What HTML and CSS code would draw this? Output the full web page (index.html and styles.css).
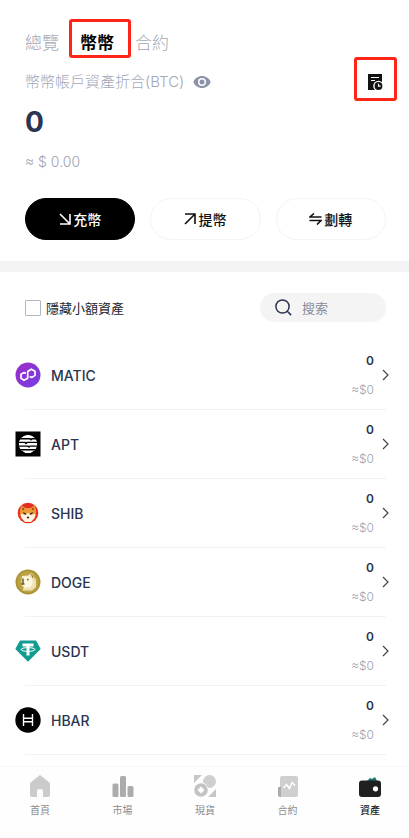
FILE: index.html
```html
<!DOCTYPE html>
<html lang="zh-Hant">
<head>
  <meta charset="UTF-8">
  <meta name="viewport" content="width=device-width, initial-scale=1.0">
  <title>資產</title>
  <link rel="stylesheet" href="styles.css">
</head>
<body>
  <header class="summary">
    <nav class="tabs">
      <a href="#overview">總覽</a>
      <a href="#spot" class="active marked">幣幣</a>
      <a href="#futures">合約</a>
    </nav>

    <div class="account">
      <span>幣幣帳戶資產折合(BTC)</span>
      <button class="icon-button eye" aria-label="顯示餘額">
        <svg width="18" height="12" viewBox="0 0 18 12"><path d="M9 0C5 0 1.7 2.500 0.300 6 1.700 9.500 5 12 9 12s7.300-2.500 8.700-6C16.300 2.500 13 0 9 0z" fill="#8b93a7"/><circle cx="9" cy="6" r="4" fill="#fff"/><circle cx="9" cy="6" r="2.500" fill="#8b93a7"/></svg>
      </button>
      <button class="icon-button history marked" aria-label="歷史記錄">
        <svg width="16" height="18" viewBox="0 0 16 18"><path d="M1 1h14v16H1z" fill="#111"/><path d="M4 4.500h8M4 7.500h4" stroke="#fff" stroke-width="1.200"/><circle cx="11.500" cy="13" r="4.600" fill="#111" stroke="#fff" stroke-width="1.400"/><path d="M11.500 10.800V13.200h2.200" fill="none" stroke="#fff" stroke-width="1.200"/></svg>
      </button>
    </div>

    <div class="amount">0</div>
    <div class="fiat">≈ $ 0.00</div>

    <div class="actions">
      <button class="action primary">
        <svg width="12" height="12" viewBox="0 0 12 12"><path d="M1 1l10 10M11 1v10H1" /></svg>充幣
      </button>
      <button class="action">
        <svg width="12" height="12" viewBox="0 0 12 12"><path d="M1 11L11 1M1 1h10v10" /></svg>提幣
      </button>
      <button class="action">
        <svg width="13" height="12" viewBox="0 0 13 12"><path d="M5 0.500L1 4h11.500M0.500 7.500H12L8 11.500" /></svg>劃轉
      </button>
    </div>
  </header>

  <main class="assets">
    <div class="filters">
      <label class="hide-small"><input type="checkbox">隱藏小額資產</label>
      <label class="search">
        <svg width="17" height="17" viewBox="0 0 17 17"><circle cx="7.500" cy="7.500" r="6.600"/><path d="M12.300 12.300l3.800 3.800"/></svg>
        <input type="text" placeholder="搜索" aria-label="搜索">
      </label>
    </div>

    <ul class="coins">
      <li>
        <a href="#matic" class="coin">
          <svg class="logo" viewBox="0 0 26 26"><defs><linearGradient id="polygon" x1="0" y1="0" x2="1" y2="1"><stop offset="0" stop-color="#a02bc4"/><stop offset="1" stop-color="#7340e6"/></linearGradient></defs><circle cx="13" cy="13" r="12.500" fill="url(#polygon)"/><path d="M11 11.300L8.700 10.600 6 12.300v4l3 2 3.700-2V9.500l3.600-2.300 3.700 2v4.200l-3 2-2.400-.900" fill="none" stroke="#fff" stroke-width="1.700" stroke-linejoin="round"/></svg>
          <span class="name">MATIC</span>
          <span class="balance"><b>0</b><small>≈$0</small></span>
          <svg class="chevron" viewBox="0 0 7 12"><path d="M1 1l5 5-5 5"/></svg>
        </a>
      </li>
      <li>
        <a href="#apt" class="coin">
          <svg class="logo" viewBox="0 0 26 26"><path d="M0.500 0.500h25v25h-25z" fill="#000"/><clipPath id="disc"><circle cx="13" cy="13" r="9.300"/></clipPath><g clip-path="url(#disc)"><circle cx="13" cy="13" r="9.300" fill="#fff"/><path d="M3 7.800h12l1 1 1-1h6M3 11.400h7l1 1 1-1h11M3 15.100h10l1 1 1-1h8M3 18.800h20" fill="none" stroke="#000" stroke-width="1.400"/></g></svg>
          <span class="name">APT</span>
          <span class="balance"><b>0</b><small>≈$0</small></span>
          <svg class="chevron" viewBox="0 0 7 12"><path d="M1 1l5 5-5 5"/></svg>
        </a>
      </li>
      <li>
        <a href="#shib" class="coin">
          <svg class="logo" viewBox="0 0 26 26"><circle cx="13" cy="13" r="10.300" fill="#e52d20"/><path d="M6 5l4.500 3h5L20 5l1.200 7-1 5.500-4.200 4.300h-6l-4.200-4.300-1-5.500z" fill="#ee9a35"/><path d="M5.500 14l4.500.500L13 13l3 1.500 4.500-.5-1 4-3.500 4h-6l-3.500-4z" fill="#fff3df"/><path d="M7.200 7l2.300 2-2 1.500zM18.800 7l-2.300 2 2 1.500z" fill="#8e3d20"/><path d="M8.500 12.500l2.800 1.700-2-.100zM17.500 12.500l-2.800 1.700 2-.100zM12 17h2l-.7 1.200h-.6z" fill="#17100d" stroke="#17100d" stroke-width=".5"/></svg>
          <span class="name">SHIB</span>
          <span class="balance"><b>0</b><small>≈$0</small></span>
          <svg class="chevron" viewBox="0 0 7 12"><path d="M1 1l5 5-5 5"/></svg>
        </a>
      </li>
      <li>
        <a href="#doge" class="coin">
          <svg class="logo" viewBox="0 0 26 26"><circle cx="13" cy="13" r="12.500" fill="#aa9435"/><circle cx="13" cy="13" r="10.600" fill="#bda443"/><path d="M7 7l5.500-.500L17 4l1.500 3.500L21 11v7l-4 3.500H7.500L9 18l-3-2z" fill="#eee1b6"/><path d="M7 7.500h7c5 1 5 9 0 11H8.500" fill="#fff8df"/><path d="M8 9.500v5.500h1.500M12 10.500h1.600M6 15h2.500" fill="none" stroke="#6c5b31" stroke-width="1.500"/><path d="M16.500 5l1.500 4" stroke="#8b7433"/></svg>
          <span class="name">DOGE</span>
          <span class="balance"><b>0</b><small>≈$0</small></span>
          <svg class="chevron" viewBox="0 0 7 12"><path d="M1 1l5 5-5 5"/></svg>
        </a>
      </li>
      <li>
        <a href="#usdt" class="coin">
          <svg class="logo" viewBox="0 0 26 26"><path d="M5 2.500h16l4.700 8.500L13 23.800.300 11z" fill="#129b91"/><path d="M7.500 5.500h11v3h-4v9h-3v-9h-4z" fill="#fff"/><ellipse cx="13" cy="11.500" rx="7" ry="1.900" fill="none" stroke="#fff" stroke-width="1"/></svg>
          <span class="name">USDT</span>
          <span class="balance"><b>0</b><small>≈$0</small></span>
          <svg class="chevron" viewBox="0 0 7 12"><path d="M1 1l5 5-5 5"/></svg>
        </a>
      </li>
      <li>
        <a href="#hbar" class="coin">
          <svg class="logo" viewBox="0 0 26 26"><circle cx="13" cy="13" r="12.700" fill="#000"/><path d="M8.500 7v12M17.500 7v12M8.500 11.300h9M8.500 14.700h9" stroke="#fff" stroke-width="1.400"/></svg>
          <span class="name">HBAR</span>
          <span class="balance"><b>0</b><small>≈$0</small></span>
          <svg class="chevron" viewBox="0 0 7 12"><path d="M1 1l5 5-5 5"/></svg>
        </a>
      </li>
    </ul>
  </main>

  <nav class="bottom-nav">
    <a href="#home">
      <svg viewBox="0 0 22 24"><path d="M11 1L1.500 8.500Q1 9 1 10v11q0 2 2 2h5v-6q0-2 3-2t3 2v6h5q2 0 2-2V10q0-1-.500-1.500z" fill="#cbcbcb"/></svg>
      首頁
    </a>
    <a href="#market">
      <svg viewBox="0 0 22 24"><g fill="#acacac"><rect x="0.500" y="9.500" width="6" height="13.500" rx="1.500"/><rect x="8" y="2" width="6" height="21" rx="1.500"/><rect x="15.500" y="12" width="6" height="11" rx="1.500"/></g></svg>
      市場
    </a>
    <a href="#trade">
      <svg viewBox="0 0 22 24"><path d="M0 1h8L0 9zM22 15v8h-8z" fill="#c6c6c6"/><circle cx="15.500" cy="7.500" r="6.500" fill="#cfcfcf"/><circle cx="7" cy="16" r="7.500" fill="#fff"/><circle cx="7" cy="16" r="6.800" fill="#c3c3c3"/><path d="M7 12.500l3.500 3.500L7 19.500 3.500 16z" fill="#fff"/></svg>
      現貨
    </a>
    <a href="#contracts">
      <svg viewBox="0 0 22 24"><path d="M5 2h14q2 0 2 2v17q0 2-2 2H3V4q0-2 2-2z" fill="#cfcfcf"/><path d="M1 13h3v10H3q-2 0-2-2z" fill="#ababab"/><path d="M6.500 14l3-3.500 3 4L15 8.500l3 3" fill="none" stroke="#fff" stroke-width="1.500"/></svg>
      合約
    </a>
    <a href="#assets" class="active">
      <svg viewBox="0 0 22 24"><path d="M8 7l3-3 2 1 3-2 2 4z" fill="#16766a"/><rect x="0" y="6.500" width="22" height="16.500" rx="3" fill="#202020"/><circle cx="16.500" cy="14.800" r="2.600" fill="#fff"/></svg>
      資產
    </a>
  </nav>
</body>
</html>
```

FILE: styles.css
```css
* {
  box-sizing: border-box;
}

body {
  display: flex;
  flex-direction: column;
  min-height: 100vh;
  margin: 0;
  background: #fff;
  color: #2b3450;
  font-family: Inter, "Noto Sans CJK TC", sans-serif;
  font-size: 14px;
}

a {
  color: inherit;
  text-decoration: none;
}

button,
input {
  font: inherit;
  color: inherit;
}

svg {
  display: block;
  flex: none;
}

.summary {
  padding: 31px 23px 21px 25px;
  border-bottom: 11px solid #f4f4f4;
}

.tabs {
  display: flex;
  gap: 21px;
  height: 24px;
  color: #a3a8b5;
  font-size: 17px;
  font-weight: 300;
  line-height: 24px;
}

.tabs .active {
  color: #000;
  font-weight: 700;
}

/* red highlight frames */
.marked {
  position: relative;
}

.marked::after {
  content: "";
  position: absolute;
  inset: -12px -17px -3px -11px;
  border: 3px solid #ff2518;
  border-radius: 3px;
}

.account {
  display: flex;
  align-items: center;
  margin-top: 16px;
  color: #a3a8b5;
  font-size: 15px;
  font-weight: 300;
  line-height: 22px;
}

.icon-button {
  padding: 0;
  border: none;
  background: none;
  cursor: pointer;
}

.eye {
  margin-left: 9px;
}

.history {
  margin-left: auto;
  margin-right: 3px;
}

.history.marked::after {
  inset: -16px -14px -10px -13px;
}

.amount {
  margin-top: 12px;
  font-size: 28px;
  font-weight: 700;
  line-height: 34px;
}

.fiat {
  margin-top: 13px;
  color: #9ba1b0;
  font-weight: 300;
  line-height: 20px;
}

.actions {
  display: grid;
  grid-template-columns: repeat(3, 1fr);
  gap: 15px;
  margin-top: 26px;
}

.action {
  display: flex;
  align-items: center;
  justify-content: center;
  gap: 2px;
  height: 42px;
  padding: 0;
  border: 1px solid #f4f4f4;
  border-radius: 21px;
  background: #fff;
  color: #111;
  font-size: 14px;
  font-weight: 500;
  cursor: pointer;
}

.action.primary {
  border-color: #000;
  background: #000;
  color: #fff;
}

.action svg {
  fill: none;
  stroke: currentColor;
  stroke-width: 1.6;
}

.assets {
  flex: 1;
  padding: 21px 23px 11px 25px;
}

.filters {
  display: flex;
  align-items: center;
  justify-content: space-between;
  font-size: 13px;
}

.hide-small {
  display: flex;
  align-items: center;
  gap: 5px;
  color: #22252e;
}

.hide-small input {
  appearance: none;
  width: 16px;
  height: 16px;
  margin: 0;
  border: 1px solid #b4b7c0;
  border-radius: 1px;
  background: #fff;
}

.hide-small input:checked {
  background: #2b3450;
}

.search {
  display: flex;
  align-items: center;
  gap: 10px;
  width: 35%;
  max-width: 126px;
  height: 29px;
  padding: 0 15px;
  border-radius: 15px;
  background: #f4f4f4;
}

.search svg {
  fill: none;
  stroke: #2b3450;
  stroke-width: 1.5;
}

.search input {
  width: 100%;
  min-width: 0;
  padding: 0;
  border: none;
  outline: none;
  background: none;
}

.search input::placeholder {
  color: #858b9c;
  opacity: 1;
}

.coins {
  margin: 19px 0 0;
  padding: 0;
  list-style: none;
}

.coins li {
  border-bottom: 1px solid #f2f2f2;
}

.coin {
  display: flex;
  align-items: center;
  height: 68px;
  margin: 0 -3px 0 -10px;
}

.logo {
  width: 26px;
  height: 26px;
}

.name {
  margin-left: 10px;
  font-weight: 500;
}

.balance {
  display: flex;
  flex-direction: column;
  gap: 11px;
  margin-left: auto;
  text-align: right;
  font-size: 12px;
  line-height: 18px;
}

.balance b {
  font-weight: 600;
}

.balance small {
  color: #9ba1b0;
  font-size: 12px;
  font-weight: 300;
}

.chevron {
  width: 7px;
  height: 12px;
  margin-left: 8px;
  fill: none;
  stroke: #444;
  stroke-width: 1.2;
}

.bottom-nav {
  position: sticky;
  bottom: 0;
  display: flex;
  justify-content: space-between;
  height: 72px;
  padding: 7px 28px 0 29px;
  border-top: 1px solid #f8f8f8;
  background: #fefefe;
}

.bottom-nav a {
  display: flex;
  flex-direction: column;
  align-items: center;
  gap: 4px;
  width: 22px;
  color: #8c8c8c;
  font-size: 10px;
  line-height: 16px;
  white-space: nowrap;
}

.bottom-nav svg {
  width: 22px;
  height: 24px;
}

.bottom-nav .active {
  color: #1c1c26;
  font-weight: 500;
}
```
